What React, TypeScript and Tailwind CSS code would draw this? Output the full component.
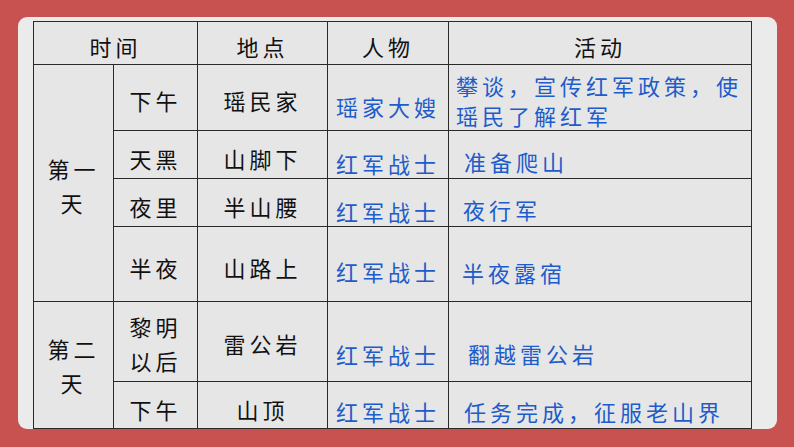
import React from 'react';

const cell = "border border-[#2a2a2a] bg-[#e6e6e6] align-middle p-0";
const black = "text-[#111] tracking-[4px] leading-[24px]";
const blue = "text-[#1d5cca] tracking-[4px] leading-[24px]";

export default function App() {
  return (
    <div
      className="w-[794px] h-[447px] bg-[#c85250] pt-[17px] pl-[18px] pr-[17px] pb-[18px]"
      style={{ fontFamily: '"Noto Sans CJK SC", "Noto Sans", sans-serif' }}
    >
      <div className="h-[412px] rounded-[9px] bg-[#ebebeb] pl-[15px] pt-[4px]">
        <table className="table-fixed border-collapse w-[718px] text-[22px]">
          <colgroup>
            <col className="w-[80px]" />
            <col className="w-[84px]" />
            <col className="w-[130px]" />
            <col className="w-[121px]" />
            <col className="w-[303px]" />
          </colgroup>
          <tbody>
            {/* 表头 */}
            <tr className="h-[43px]">
              <td colSpan={2} className={`${cell} text-center pt-[6px] ${black}`}>时间</td>
              <td className={`${cell} text-center pt-[6px] ${black}`}>地点</td>
              <td className={`${cell} text-center pt-[6px] ${black}`}>人物</td>
              <td className={`${cell} text-center pt-[6px] ${black}`}>活动</td>
            </tr>

            {/* 第一天 */}
            <tr className="h-[66px]">
              <td rowSpan={4} className={`${cell} text-center pt-[4px] ${black} leading-[34px]`}>
                第一<br />天
              </td>
              <td className={`${cell} text-center pt-[4px] ${black}`}>下午</td>
              <td className={`${cell} text-center pt-[4px] ${black}`}>瑶民家</td>
              <td className={`${cell} text-center pt-[16px] ${blue}`}>瑶家大嫂</td>
              <td className={`${cell} pl-[7px] pt-[5px] ${blue} leading-[30px]`}>
                攀谈，宣传红军政策，使<br />瑶民了解红军
              </td>
            </tr>
            <tr className="h-[48px]">
              <td className={`${cell} text-center pt-[6px] ${black}`}>天黑</td>
              <td className={`${cell} text-center pt-[6px] ${black}`}>山脚下</td>
              <td className={`${cell} text-center pt-[16px] ${blue}`}>红军战士</td>
              <td className={`${cell} pl-[15px] pt-[12px] ${blue}`}>准备爬山</td>
            </tr>
            <tr className="h-[48px]">
              <td className={`${cell} text-center pt-[6px] ${black}`}>夜里</td>
              <td className={`${cell} text-center pt-[6px] ${black}`}>半山腰</td>
              <td className={`${cell} text-center pt-[16px] ${blue}`}>红军战士</td>
              <td className={`${cell} pl-[14px] pt-[12px] ${blue}`}>夜行军</td>
            </tr>
            <tr className="h-[75px]">
              <td className={`${cell} text-center pt-[6px] ${black}`}>半夜</td>
              <td className={`${cell} text-center pt-[6px] ${black}`}>山路上</td>
              <td className={`${cell} text-center pt-[14px] ${blue}`}>红军战士</td>
              <td className={`${cell} pl-[13px] pt-[16px] ${blue}`}>半夜露宿</td>
            </tr>

            {/* 第二天 */}
            <tr className="h-[80px]">
              <td rowSpan={2} className={`${cell} text-center pt-0 ${black} leading-[34px]`}>
                第二<br />天
              </td>
              <td className={`${cell} text-center pt-[2px] ${black} leading-[34px]`}>
                黎明<br />以后
              </td>
              <td className={`${cell} text-center pt-[2px] ${black}`}>雷公岩</td>
              <td className={`${cell} text-center pt-[24px] ${blue}`}>红军战士</td>
              <td className={`${cell} pl-[19px] pt-[22px] ${blue}`}>翻越雷公岩</td>
            </tr>
            <tr className="h-[47px]">
              <td className={`${cell} text-center pt-[7px] ${black}`}>下午</td>
              <td className={`${cell} text-center pt-[7px] ${black}`}>山顶</td>
              <td className={`${cell} text-center pt-[11px] ${blue}`}>红军战士</td>
              <td className={`${cell} pl-[15px] pt-[11px] ${blue}`}>任务完成，征服老山界</td>
            </tr>
          </tbody>
        </table>
      </div>
    </div>
  );
}
